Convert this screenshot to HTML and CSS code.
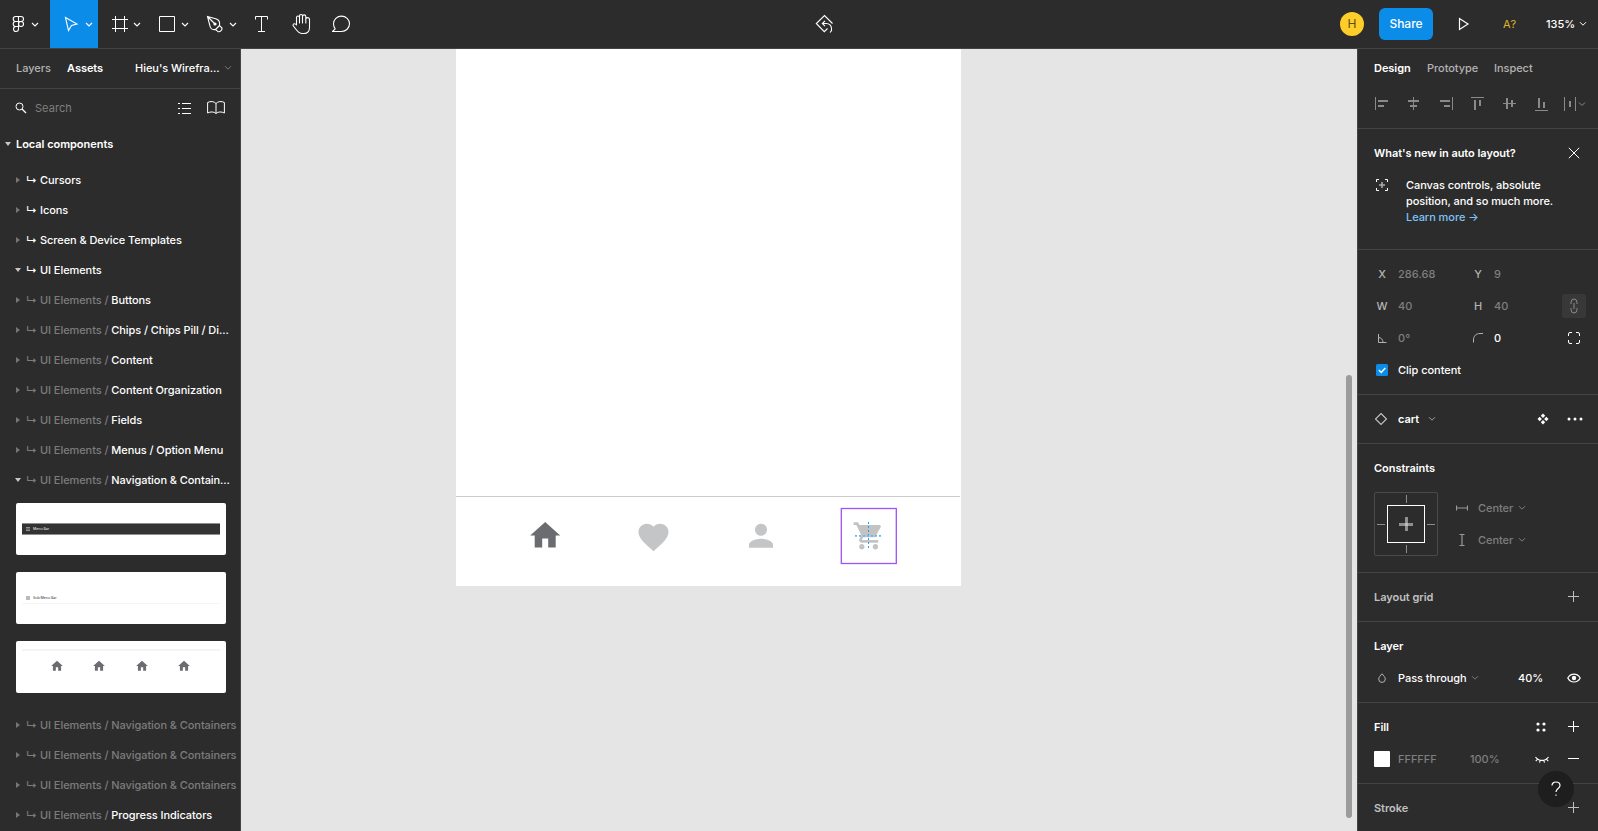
FILE: index.html
```html
<!DOCTYPE html>
<html lang="en">
<head>
<meta charset="utf-8">
<title>Wireframe editor</title>
<link rel="stylesheet" href="styles.css">
</head>
<body>
<svg class="defs" aria-hidden="true">
  <symbol id="chev" viewBox="0 0 8 6"><path d="M1 1.2l3 3 3-3" fill="none" stroke="currentColor"/></symbol>
  <symbol id="home" viewBox="0 0 24 24"><path d="M10 20v-6h4v6h5v-8h3L12 3 2 12h3v8z" fill="#6a6c70"/></symbol>
  <symbol id="right" viewBox="0 0 6 8"><path d="M1 1l4 3-4 3z" fill="#767676"/></symbol>
  <symbol id="down" viewBox="0 0 6 8"><path d="M0 2h6L3 6z" fill="#c8c8c8"/></symbol>
  <symbol id="plus" viewBox="0 0 12 12"><path d="M6 .5v11M.5 6h11" transform="translate(-.5 -.5)" fill="none" stroke="currentColor"/></symbol>
</svg>
<div class="app">
  <header class="toolbar">
    <div class="tool wide"><svg viewBox="0 0 50 48"><g fill="none" stroke="#fff" stroke-width="1.1"><path d="M18.500 16.500h-2.800a2.500 2.500 0 0 0 0 5h2.800zM18.500 16.500h2.500a2.500 2.500 0 0 1 0 5h-2.500zM18.500 21.500h-2.800a2.500 2.500 0 0 0 0 5h2.800zM18.500 26.500h-2.800a2.500 2.500 0 1 0 2.800 2.500z"/><circle cx="21" cy="24" r="2.500"/></g><path class="cv" d="M32 23l3 3 3-3"/></svg></div>
    <div class="tool active"><svg viewBox="0 0 48 48"><path d="M15.500 17.500l11.500 6.500-5.500 1.500-3 5z" fill="none" stroke="#fff" stroke-width="1.100"/><path class="cv" d="M36 23l3 3 3-3"/></svg></div>
    <div class="tool"><svg viewBox="0 0 48 48"><path d="M17.500 16v16M26.500 16v16M14 19.500h16M14 28.500h16" fill="none" stroke="#fff"/><path class="cv" d="M36 23l3 3 3-3"/></svg></div>
    <div class="tool"><svg viewBox="0 0 48 48"><path d="M13.500 16.500h15v15h-15z" fill="none" stroke="#fff"/><path class="cv" d="M36 23l3 3 3-3"/></svg></div>
    <div class="tool"><svg viewBox="0 0 48 48"><g fill="none" stroke="#fff" stroke-width="1.100"><path d="M13.500 16.500l9 2.500c2.500 1 3.500 3.500 3 6.500l-4 4c-3 .5-5-1-5.500-3.500zM14 17l6.500 6.500M21.500 29.500l4-4 2.500 2.500c.3 2-1.500 4-3.800 3.800z"/></g><circle cx="21" cy="24" r="1.600" fill="#fff"/><path class="cv" d="M36 23l3 3 3-3"/></svg></div>
    <div class="tool slim"><svg viewBox="0 0 40 48"><path d="M13.500 19.500v-3h12v3M19.500 16.500v15M16 31.500h7" fill="none" stroke="#fff"/></svg></div>
    <div class="tool slim"><svg viewBox="0 0 40 48"><path d="M14.500 25v-7.500a1.400 1.400 0 0 1 3 0V23v-7a1.500 1.500 0 0 1 3 0v7-6.500a1.500 1.500 0 0 1 3.300 0V23v-3.500a1.500 1.500 0 0 1 3.700 0v8c0 4-2.500 6-5.500 6h-2.500c-2.500 0-3.500-1.500-5-3.500l-3.500-4.500c0-2 2-2.500 3.500-.5z" fill="none" stroke="#fff" stroke-width="1.100" stroke-linejoin="round"/></svg></div>
    <div class="tool slim"><svg viewBox="0 0 40 48"><path d="M10.500 31.500h9a8 7.700 0 1 0-8-7.700c0 2 .6 3.700 1.700 5z" fill="none" stroke="#fff" stroke-width="1.100" stroke-linejoin="round"/></svg></div>
    <div class="middle"><svg width="20" height="20" viewBox="0 0 20 20"><g fill="none" stroke="#fff" stroke-width="1.100"><path d="M12.500 14.500l-3.200 3.200-8-8.200 8.200-8 8 8"/><path d="M10 6.800L7.300 9.500 10 12.200M7.300 9.500h4c3 0 5.200 2.200 5.200 5.200v1.800l-1.500 2"/></g></svg></div>
    <div class="session">
      <span class="avatar">H</span>
      <button class="share">Share</button>
      <svg class="play" width="12" height="14" viewBox="0 0 12 14"><path d="M1.500 1.500v11L10 7z" fill="none" stroke="#fff" stroke-width="1.200"/></svg>
      <span class="missing">A?</span>
      <span class="zoom">135%</span>
      <svg class="chev" width="8" height="6"><use href="#chev"/></svg>
    </div>
  </header>

  <div class="body">
    <aside class="left">
      <div class="ltabs"><span class="dim">Layers</span><b>Assets</b><span class="page">Hieu's Wirefra...</span><svg class="chev faint" width="8" height="6"><use href="#chev"/></svg></div>
      <div class="search">
        <svg width="12" height="12" viewBox="0 0 12 12"><circle cx="4.500" cy="4.500" r="3.500" fill="none" stroke="#fff"/><path d="M7 7l4 4" stroke="#fff" stroke-width="1.200"/></svg>
        <span>Search</span>
        <svg class="list" width="13" height="12" viewBox="0 0 13 12"><path d="M0 1.500h2M4 1.500h9M0 6.500h2M4 6.500h9M0 11.500h2M4 11.500h9" stroke="#fff"/></svg>
        <svg width="18" height="13" viewBox="0 0 18 13"><path d="M9 2.500C7 .2 3.500 0 .6 1.500V12C3.500 10.500 7 10.500 9 12.500 11 10.500 14.500 10.500 17.400 12V1.500C14.500 0 11 .2 9 2.500zM9 2.500v10" fill="none" stroke="#fff"/></svg>
      </div>
      <div class="local"><svg width="6" height="8"><use href="#down"/></svg><b>Local components</b></div>
      <div class="row"><svg width="6" height="8"><use href="#right"/></svg><i>↳</i><span>Cursors</span></div>
      <div class="row"><svg width="6" height="8"><use href="#right"/></svg><i>↳</i><span>Icons</span></div>
      <div class="row"><svg width="6" height="8"><use href="#right"/></svg><i>↳</i><span>Screen &amp; Device Templates</span></div>
      <div class="row"><svg width="6" height="8"><use href="#down"/></svg><i>↳</i><span>UI Elements</span></div>
      <div class="row sub"><svg width="6" height="8"><use href="#right"/></svg><i>↳</i><span>UI Elements / <em>Buttons</em></span></div>
      <div class="row sub"><svg width="6" height="8"><use href="#right"/></svg><i>↳</i><span>UI Elements / <em>Chips / Chips Pill / Di...</em></span></div>
      <div class="row sub"><svg width="6" height="8"><use href="#right"/></svg><i>↳</i><span>UI Elements / <em>Content</em></span></div>
      <div class="row sub"><svg width="6" height="8"><use href="#right"/></svg><i>↳</i><span>UI Elements / <em>Content Organization</em></span></div>
      <div class="row sub"><svg width="6" height="8"><use href="#right"/></svg><i>↳</i><span>UI Elements / <em>Fields</em></span></div>
      <div class="row sub"><svg width="6" height="8"><use href="#right"/></svg><i>↳</i><span>UI Elements / <em>Menus / Option Menu</em></span></div>
      <div class="row sub"><svg width="6" height="8"><use href="#down"/></svg><i>↳</i><span>UI Elements / <em>Navigation &amp; Contain...</em></span></div>
      <div class="cards">
        <div class="card"><div class="menubar"><svg width="4" height="4" viewBox="0 0 4 4"><path d="M0 .5h4M0 2h4M0 3.500h4" stroke="#bbb" stroke-width=".7"/></svg><span>Menu Bar</span></div></div>
        <div class="card"><div class="submenu"><svg width="4" height="4" viewBox="0 0 4 4"><path d="M0 0h4v4H0z" fill="#bbb"/></svg><span>Sub Menu Bar</span></div></div>
        <div class="card"><div class="tabbar"><svg width="14" height="14"><use href="#home"/></svg><svg width="14" height="14"><use href="#home"/></svg><svg width="14" height="14"><use href="#home"/></svg><svg width="14" height="14"><use href="#home"/></svg></div></div>
      </div>
      <div class="row sub"><svg width="6" height="8"><use href="#right"/></svg><i>↳</i><span>UI Elements / Navigation &amp; Containers</span></div>
      <div class="row sub"><svg width="6" height="8"><use href="#right"/></svg><i>↳</i><span>UI Elements / Navigation &amp; Containers</span></div>
      <div class="row sub"><svg width="6" height="8"><use href="#right"/></svg><i>↳</i><span>UI Elements / Navigation &amp; Containers</span></div>
      <div class="row sub"><svg width="6" height="8"><use href="#right"/></svg><i>↳</i><span>UI Elements / <em>Progress Indicators</em></span></div>
    </aside>

    <main class="canvas">
      <div class="frame">
        <svg class="navbar" viewBox="456 497 504 88">
          <svg x="527.200" y="517.600" width="36" height="36"><use href="#home"/></svg>
          <g fill="#c4c5c7">
            <path transform="translate(635.500 519.200) scale(1.500)" d="M12 21.350l-1.450-1.320C5.400 15.360 2 12.280 2 8.500 2 5.420 4.420 3 7.500 3c1.740 0 3.410.81 4.500 2.090C13.090 3.810 14.760 3 16.500 3 19.580 3 22 5.420 22 8.500c0 3.780-3.400 6.860-8.550 11.540L12 21.350z"/>
            <path transform="translate(743 517.700) scale(1.500)" d="M12 12c2.210 0 4-1.790 4-4s-1.790-4-4-4-4 1.790-4 4 1.790 4 4 4zm0 2c-2.670 0-8 1.340-8 4v2h16v-2c0-2.660-5.330-4-8-4z"/>
            <path fill="#c3c3c3" transform="translate(852.300 519.600) scale(1.360)" d="M7 18c-1.100 0-1.990.9-1.990 2S5.900 22 7 22s2-.9 2-2-.9-2-2-2zM1 2v2h2l3.600 7.590-1.350 2.450c-.16.28-.25.61-.25.96 0 1.100.9 2 2 2h12v-2H7.420c-.14 0-.25-.11-.25-.25l.03-.12.9-1.630h7.450c.75 0 1.410-.41 1.750-1.030l3.580-6.490A1 1 0 0 0 20 4H5.210l-.94-2H1zm16 16c-1.100 0-1.990.9-1.990 2s.89 2 1.990 2 2-.9 2-2-.9-2-2-2z"/>
          </g>
          <path d="M868.500 522v28" fill="none" stroke="#18a0fb" stroke-dasharray="2 2"/>
          <path d="M855 535.900h27" fill="none" stroke="#62b9f7" stroke-width="1.600" stroke-dasharray="2 2"/>
          <rect x="841.300" y="508.500" width="55" height="55" fill="none" stroke="#9f52f5" stroke-width="1.300"/>
        </svg>
      </div>
      <div class="scroll"></div>
    </main>

    <aside class="right">
      <section class="head">
        <div class="rtabs"><b>Design</b><span>Prototype</span><span>Inspect</span></div>
        <div class="align">
          <svg viewBox="0 0 32 32"><path d="M9 9h1v13H9zM12 12h10v2H12zM12 17h6v2h-6z"/></svg>
          <svg viewBox="0 0 32 32"><path d="M15 9h1v13h-1zM10 12h11v2H10zM12 17h7v2h-7z"/></svg>
          <svg viewBox="0 0 32 32"><path d="M22 9h1v13h-1zM10 12h10v2H10zM14 17h6v2h-6z"/></svg>
          <svg viewBox="0 0 32 32"><path d="M9 9h13v1H9zM12 12h2v10h-2zM17 12h2v6h-2z"/></svg>
          <svg viewBox="0 0 32 32"><path d="M9 15h13v1H9zM12 10h2v11h-2zM17 12h2v7h-2z"/></svg>
          <svg viewBox="0 0 32 32"><path d="M9 22h13v1H9zM12 10h2v10h-2zM17 14h2v6h-2z"/></svg>
          <svg viewBox="0 0 32 32"><path d="M6 9h1v14H6zM17 9h1v14h-1zM11 13h2v6h-2z"/><path d="M21 14.500l3 3 3-3" fill="none" stroke="#8a8a8a"/></svg>
        </div>
      </section>
      <section class="news">
        <div class="title"><b>What's new in auto layout?</b><svg width="12" height="12" viewBox="0 0 12 12"><path d="M.8.8l10.400 10.400M11.200.8L.8 11.200" stroke="#fff"/></svg></div>
        <div class="note">
          <svg width="12" height="12" viewBox="0 0 12 12"><path d="M.5 3V.5H3M9 .5h2.500V3M11.500 9v2.500H9M3 11.500H.5V9" fill="none" stroke="#fff"/><path d="M6 3v6M3 6h6" stroke="#aaa" stroke-width="1.600"/></svg>
          <p>Canvas controls, absolute<br>position, and so much more.<br><a>Learn more →</a></p>
        </div>
      </section>
      <section class="props">
        <div class="prow"><label>X</label><span>286.68</span><label>Y</label><span>9</span></div>
        <div class="prow"><label>W</label><span>40</span><label>H</label><span>40</span><div class="link"><svg width="8" height="16" viewBox="0 0 8 16"><path d="M1 6V4.500a3 3.500 0 0 1 6 0V6M1 10v1.500a3 3.500 0 0 0 6 0V10M4 5v6" fill="none" stroke="#8c8c8c"/></svg></div></div>
        <div class="prow"><label><svg width="9" height="9" viewBox="0 0 9 9"><path d="M.5 0v8.500H8.500M.5 3.500C3 3.500 5 5.500 5 8.500" fill="none" stroke="#b3b3b3"/></svg></label><span>0°</span><label><svg width="10" height="10" viewBox="0 0 10 10"><path d="M.5 9.500V7C.5 3 3 .5 7 .5h3" fill="none" stroke="#b3b3b3"/></svg></label><span class="on">0</span><div class="corners"><svg width="12" height="12" viewBox="0 0 12 12"><path d="M.5 4V2Q.5.5 2 .5h2M8 .5h2q1.500 0 1.500 1.500v2M11.500 8v2q0 1.500-1.500 1.500H8M4 11.500H2Q.5 11.500.5 10V8" fill="none" stroke="#fff"/></svg></div></div>
        <div class="prow"><label><svg width="12" height="12" viewBox="0 0 12 12"><rect width="12" height="12" rx="1.500" fill="#0c8ce9"/><path d="M2.800 6l2.400 2.400L9.300 4" fill="none" stroke="#fff" stroke-width="1.500"/></svg></label><span class="on clip">Clip content</span></div>
      </section>
      <section class="comp">
        <svg class="dia" width="14" height="14" viewBox="0 0 14 14"><path d="M7 1.500L12.500 7 7 12.500 1.500 7z" fill="none" stroke="#c4c4c4" stroke-width="1.100"/></svg>
        <b>cart</b><svg class="chev" width="8" height="6"><use href="#chev"/></svg>
        <svg class="end" width="12" height="12" viewBox="0 0 12 12"><path d="M6 .5L8.200 2.700 6 4.900 3.800 2.700zM6 7.100l2.200 2.200L6 11.500 3.800 9.300zM2.700 3.800L4.900 6 2.700 8.200.5 6zM9.300 3.800L11.500 6 9.300 8.200 7.100 6z" fill="#fff"/></svg>
        <svg width="16" height="4" viewBox="0 0 16 4"><g fill="#fff"><circle cx="2" cy="2" r="1.500"/><circle cx="8" cy="2" r="1.500"/><circle cx="14" cy="2" r="1.500"/></g></svg>
      </section>
      <section class="constraints">
        <div class="title"><b>Constraints</b></div>
        <div class="cons">
          <svg width="64" height="64" viewBox="0 0 64 64"><rect x=".5" y=".5" width="63" height="63" rx="1.500" fill="none" stroke="#4a4a4a"/><path d="M32.500 3v8M32.500 53v8M3 32.500h8M53 32.500h8" stroke="#8c8c8c"/><rect x="13.500" y="13.500" width="37" height="37" fill="none" stroke="#fff"/><path d="M32.500 25v14M25 32.500h14" stroke="#8f8f8f" stroke-width="3"/><path d="M31 31h3v3h-3z" fill="#bbb"/></svg>
          <div class="axis">
            <div><svg width="12" height="12" viewBox="0 0 12 12"><path d="M.5 3.500v5M11.500 3.500v5M1 6h10" fill="none" stroke="#999" stroke-width="1.200"/></svg><span>Center</span><svg class="chev" width="8" height="6"><use href="#chev"/></svg></div>
            <div><svg width="12" height="12" viewBox="0 0 12 12"><path d="M3.500.5h5M3.500 11.500h5M6 1v10" fill="none" stroke="#999" stroke-width="1.200"/></svg><span>Center</span><svg class="chev" width="8" height="6"><use href="#chev"/></svg></div>
          </div>
        </div>
      </section>
      <section><div class="title dimmed"><b>Layout grid</b><svg width="12" height="12"><use href="#plus"/></svg></div></section>
      <section>
        <div class="title"><b>Layer</b></div>
        <div class="layer"><svg class="drop" width="8" height="10" viewBox="0 0 8 10"><path d="M4 .8C2.500 2.500.7 4.200.7 6.100a3.300 3.300 0 0 0 6.600 0C7.300 4.200 5.500 2.500 4 .8z" fill="none" stroke="#b3b3b3"/></svg><span>Pass through</span><svg class="chev faint" width="8" height="6"><use href="#chev"/></svg><span class="pct">40%</span><svg width="14" height="10" viewBox="0 0 14 10"><path d="M.8 5C3.500-.3 10.500-.3 13.200 5 10.500 10.300 3.500 10.300.8 5z" fill="none" stroke="#fff" stroke-width="1.200"/><circle cx="7" cy="5" r="2.200" fill="#fff"/></svg></div>
      </section>
      <section>
        <div class="title"><b>Fill</b><svg class="dots" width="10" height="10" viewBox="0 0 10 10"><g fill="#fff"><circle cx="2" cy="2" r="1.600"/><circle cx="8" cy="2" r="1.600"/><circle cx="2" cy="8" r="1.600"/><circle cx="8" cy="8" r="1.600"/></g></svg><svg width="12" height="12"><use href="#plus"/></svg></div>
        <div class="fill"><i class="swatch"></i><span class="hex">FFFFFF</span><span>100%</span><svg class="shut" width="14" height="8" viewBox="0 0 14 8"><path d="M.5 1C3.500 5.500 10.500 5.500 13.500 1M2.500 3.200L.8 5M5.200 4.400l-.7 2.300M8.800 4.400l.7 2.300M11.500 3.200L13.200 5" fill="none" stroke="#fff" stroke-width="1.100"/></svg><svg width="12" height="12" viewBox="0 0 12 12"><path d="M0 5.500h11" stroke="#fff"/></svg></div>
      </section>
      <section class="last"><div class="title dimmed"><b>Stroke</b><svg width="12" height="12"><use href="#plus"/></svg></div></section>
      <button class="help"><svg width="10" height="16" viewBox="0 0 10 16"><path d="M1 4.500C1 2.500 2.500 1 5 1s4 1.500 4 3.500C9 7.500 5 7.500 5 11" fill="none" stroke="#fff" stroke-width="1.200"/><path d="M4.400 13.500h1.200v1.200H4.400z" fill="#fff"/></svg></button>
    </aside>
  </div>
</div>
</body>
</html>
```
FILE: styles.css
```css
* { box-sizing: border-box; }
body {
  margin: 0;
  background: #2c2c2c;
  color: #fff;
  font: 500 11px/16px Inter, "Liberation Sans", sans-serif;
  letter-spacing: -.04px;
  overflow: hidden;
}
b { font-weight: 600; }
svg { display: block; flex: none; }
button { border: 0; padding: 0; font: inherit; color: #fff; }
.defs { position: absolute; width: 0; height: 0; }
.app { display: flex; flex-direction: column; width: 1598px; height: 831px; }

.toolbar { display: flex; height: 49px; border-bottom: 1px solid #444; }
.tool { width: 48px; height: 48px; }
.tool.wide { width: 50px; }
.tool.slim { width: 40px; }
.tool.active { background: #0c8ce9; }
.tool svg { width: 100%; height: 48px; }
.cv { fill: none; stroke: #fff; stroke-width: 1.1; }
.middle { display: flex; align-items: center; margin-left: 453px; }
.session { display: flex; align-items: center; margin-left: auto; padding-right: 11px; }
.avatar {
  width: 24px; height: 24px; border-radius: 50%;
  background: #ffcd29; color: #5a4a1a;
  font-weight: 400; font-size: 12px; line-height: 24px; text-align: center;
}
.share {
  width: 54px; height: 32px; margin-left: 15px; border-radius: 6px;
  background: #0c8ce9; font-size: 12px; font-weight: 500;
}
.play { margin-left: 25px; }
.missing { width: 17px; margin-left: 33px; color: #e0b42a; font-weight: 400; letter-spacing: .6px; }
.zoom { width: 28px; margin-left: 26px; }
.session .chev { margin-left: 5px; }

.body { display: flex; flex: 1; min-height: 0; }
.left { width: 241px; border-right: 1px solid #444; overflow: hidden; white-space: nowrap; }
.ltabs { display: flex; align-items: center; height: 40px; padding: 0 0 2px 16px; border-bottom: 1px solid #444; }
.ltabs .dim { width: 51px; color: #b3b3b3; }
.ltabs b { width: 68px; }
.ltabs .page { width: 89px; }
.faint { color: #7a7a7a; }
.search { display: flex; align-items: center; height: 39px; padding: 0 0 2px 15px; color: #7f7f7f; }
.search span { width: 143px; margin-left: 8px; font-weight: 400; letter-spacing: .05px; }
.search .list { margin-right: 16px; }
.local { display: flex; align-items: center; height: 32px; padding-left: 5px; }
.local b { margin-left: 5px; }
.local + .row { margin-top: 5px; }
.row { display: flex; align-items: center; height: 30px; padding-left: 15px; letter-spacing: -.07px; }
.row i { width: 14px; margin-left: 5px; font-style: normal; }
.row em { font-style: normal; color: #fff; }
.row.sub { color: #7c7c7c; }
.cards { display: flex; flex-direction: column; gap: 17px; padding: 8px 0 17px 16px; }
.card { width: 210px; height: 52px; padding: 0 6px; border-radius: 2px; background: #fff; font-size: 3.6px; line-height: 10px; }
.menubar { display: flex; align-items: center; gap: 3px; height: 12px; padding-left: 4px; background: #333; color: #ddd; border: solid #8d8f8d; border-width: 1px 0; }
.card:has(.menubar) { padding-top: 20px; }
.submenu { display: flex; align-items: center; gap: 3px; height: 11px; padding-left: 4px; color: #555; border-bottom: 1px solid #f5f5f5; }
.card:has(.submenu) { padding-top: 21px; }
.tabbar { display: flex; justify-content: space-between; padding: 7.5px 29px 0 27.7px; border-top: 2px solid #f4f4f4; }
.card:has(.tabbar) { padding-top: 8px; }

.canvas { position: relative; flex: 1; background: #e5e5e5; }
.frame { width: 504.5px; height: 536.5px; margin-left: 215px; padding-top: 447px; background: #fff; }
.navbar { width: 504px; height: 89px; border-top: 1px solid #ccc; }
.scroll { position: absolute; right: 5px; top: 326px; width: 6px; height: 443px; border-radius: 3px; background: #9c9c9c; }

.right { position: relative; width: 241px; border-left: 1px solid #444; overflow: hidden; }
.right section { padding: 8px 0; border-bottom: 1px solid #444; }
.right .head { padding-top: 3px; }
.rtabs { display: flex; height: 36px; align-items: center; padding: 0 0 4px 16px; color: #b3b3b3; }
.rtabs b { width: 53px; color: #fff; }
.rtabs span:nth-child(2) { width: 67px; }
.align { display: flex; padding-left: 8px; }
.align svg { width: 32px; height: 32px; fill: #8a8a8a; }
.title { display: flex; align-items: center; justify-content: space-between; height: 32px; padding: 0 18px 0 16px; }
.dimmed { color: #c0c0c0; }
.right .news { height: 121px; }
.note { display: flex; padding: 8px 0 0 18px; }
.note svg { margin: 2px 18px 0 0; }
.note p { margin: 0; letter-spacing: -.06px; }
.note a { color: #7cc4f8; }
.prow { display: grid; grid-template-columns: 32px 64px 32px 68px 24px; align-items: center; height: 32px; padding-left: 8px; color: #7f7f7f; }
.prow span { letter-spacing: .05px; }
.prow label { display: flex; justify-content: center; color: #b3b3b3; }
.prow .on { color: #fff; }
.prow .clip { white-space: nowrap; letter-spacing: -.04px; }
.link, .corners { display: flex; align-items: center; justify-content: center; height: 24px; }
.link { background: #383838; border-radius: 2px; }
.right .comp { display: flex; align-items: center; height: 49px; padding: 0 15px 0 16px; }
.comp b { margin: 0 9px 0 10px; }
.comp .chev { color: #a0a0a0; }
.comp .end { margin: 0 18px 0 auto; }
.cons { display: flex; padding: 8px 0 8px 16px; }
.axis { margin-left: 18px; }
.axis div { display: flex; align-items: center; height: 32px; color: #7f7f7f; }
.axis span { width: 40px; margin-left: 10px; }
.layer, .fill { display: flex; align-items: center; height: 32px; padding: 0 17px 0 16px; }
.drop { margin: 0 12px 0 4px; }
.layer span:nth-child(2) { width: 73px; }
.layer .pct { width: 29px; margin: 0 20px 0 auto; }
.dots { margin-left: auto; margin-right: 22px; }
.fill { color: #7f7f7f; padding-right: 18px; }
.swatch { width: 16px; height: 16px; margin-right: 8px; background: #fff; border-radius: 1px; }
.hex { width: 72px; }
.shut { margin: 2px 19px 0 auto; }
.right .last { border: 0; }
.help {
  position: absolute; left: 180px; top: 722px; width: 36px; height: 36px;
  display: flex; align-items: center; justify-content: center;
  border-radius: 50%; background: #1e1e1e;
}
```
